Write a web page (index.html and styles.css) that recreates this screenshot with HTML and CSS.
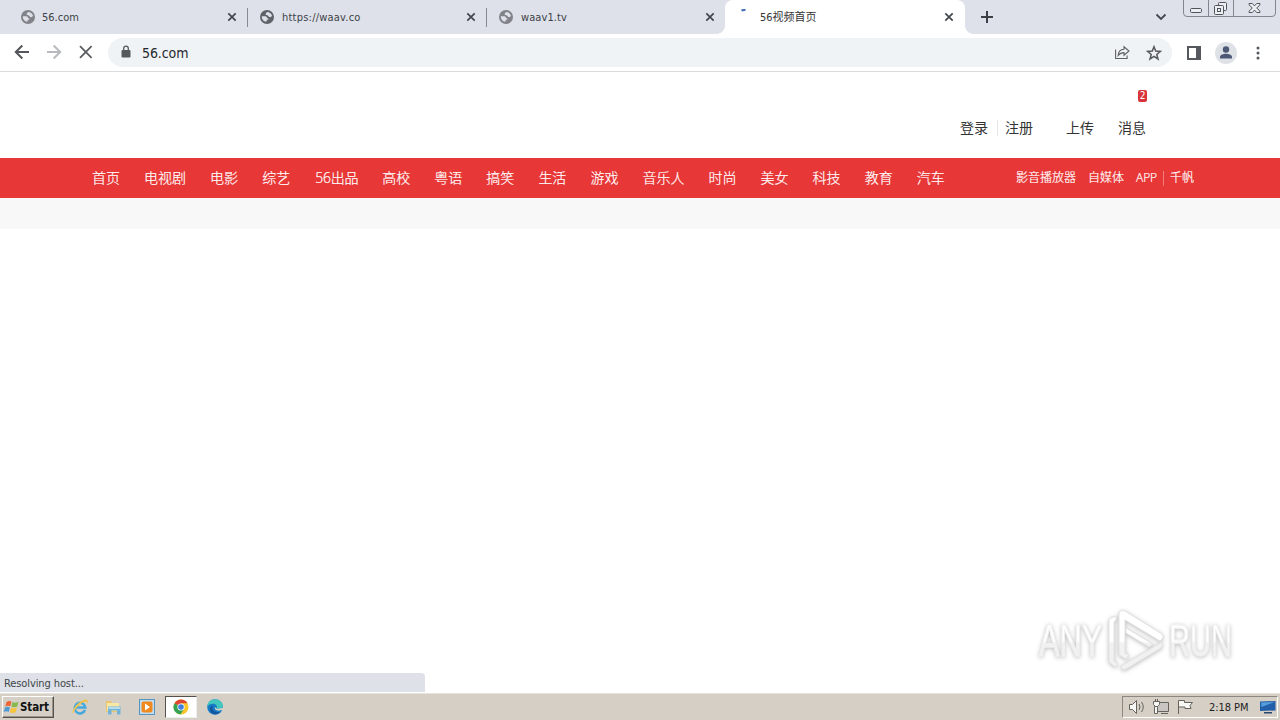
FILE: index.html
```html
<!DOCTYPE html>
<html lang="zh">
<head>
<meta charset="utf-8">
<title>56视频首页</title>
<link rel="stylesheet" href="styles.css">
</head>
<body>
<svg width="0" height="0" class="defs">
  <symbol id="globe" viewBox="0 0 14 14"><circle cx="7" cy="7" r="7" fill="currentColor"/><path d="M1.800 6.300h3.400c1.300 0 1.800.9 1.800 1.900h1.300v1.500H6.700v1.900c-2.800.3-5-2.300-4.900-5.300zM7.700 2.100c2 .3 3.700 1.700 4.300 3.700-.5 1.100-1.500 1.600-2.600 1.300-.9-.2-.8-1.400-1.500-1.600-1-.2-2.200.1-2.200-1.200 0-1.200 1-1.900 2-2.200z" fill="#dee1e9"/></symbol>
  <symbol id="close" viewBox="0 0 10 10"><path d="M1.300 1.300l7.400 7.400M8.700 1.300L1.300 8.700" stroke="#43474c" stroke-width="1.700"/></symbol>
</svg>
<div class="tabs">
  <div class="tab t1"><svg class="fav gray"><use href="#globe"/></svg><span class="title">56.com</span><svg class="x"><use href="#close"/></svg></div>
  <div class="tab t2"><svg class="fav"><use href="#globe"/></svg><span class="title">https://waav.co</span><svg class="x"><use href="#close"/></svg></div>
  <div class="tab t3"><svg class="fav gray"><use href="#globe"/></svg><span class="title">waav1.tv</span><svg class="x"><use href="#close"/></svg></div>
  <div class="tab active"><svg class="spin" viewBox="0 0 14 14"><path d="M4.500 1.700Q6 .7 8.500 1" stroke="#4472b8" stroke-width="2" fill="none"/></svg><span class="title">56视频首页</span><svg class="x"><use href="#close"/></svg></div>
  <svg class="plus" viewBox="0 0 14 14"><path d="M7 1v12M1 7h12" stroke="#3c4045" stroke-width="2"/></svg>
  <svg class="chev" viewBox="0 0 12 8"><path d="M1.500 1.500L6 6l4.500-4.500" stroke="#43474c" stroke-width="1.800" fill="none"/></svg>
  <svg class="winbtns" viewBox="0 0 94 18"><path d="M.5 0v13q0 3.500 3.500 3.500h85q3.500 0 3.500-3.500V0M25.500 0v16.500M50.500 0v16.500" fill="none" stroke="#82868f"/><g fill="#eceef2" stroke="#50545b"><rect x="7.500" y="8.500" width="11" height="4" rx="1.200"/><rect x="35.500" y="2.500" width="8" height="8" rx="1"/><rect x="31.500" y="5.500" width="9" height="9" rx="1"/><rect x="34.500" y="8.500" width="3" height="3"/><path d="M66 3.500h3.300l2.200 2.400 2.200-2.400H77v1.300L73.700 8l3.300 3.200v1.300h-3.300l-2.200-2.400-2.200 2.400H66v-1.300L69.300 8 66 4.800z"/></g></svg>
</div>
<div class="toolbar">
  <svg class="navi" viewBox="0 0 90 20"><g fill="none" stroke-width="2"><path d="M15 9H2M8.300 2.500L1.800 9l6.500 6.500" stroke="#53565a"/><path d="M33 9h13M39.700 2.500l6.500 6.500-6.500 6.500" stroke="#b8babd"/><path d="M66 3.200l11.600 11.600M77.600 3.200L66 14.800" stroke="#5a5d61" stroke-width="1.800"/></g></svg>
  <div class="omnibox">
    <svg class="lock" viewBox="0 0 10 12"><rect x=".5" y="4.500" width="9" height="7.500" rx="1" fill="#55585d"/><path d="M2.700 5V3a2.300 2.300 0 0 1 4.600 0v2" fill="none" stroke="#55585d" stroke-width="1.300"/></svg>
    <span class="url">56.com</span>
    <svg class="share" viewBox="0 0 16 15"><path d="M1.600 4.500v9h11.500v-3" fill="none" stroke="#5d6166" stroke-width="1.100"/><path d="M4.200 10.500c.2-4 2.300-6 5.800-6.200V1.800l5 4.200-5 4.200V7.600c-2.700 0-4.400 1-5.800 2.900z" fill="none" stroke="#5d6166" stroke-width="1.100"/></svg>
    <svg class="star" viewBox="0 0 16 16"><path d="M8 1.700l1.700 4.400 4.700.3-3.600 3 1.200 4.600L8 11.400 4 14l1.200-4.600-3.600-3 4.700-.3z" fill="none" stroke="#55585d" stroke-width="1.500"/></svg>
  </div>
  <svg class="panel" viewBox="0 0 14 14"><rect x="1" y="1" width="12" height="12" fill="#fff" stroke="#55585d" stroke-width="2"/><path d="M9 1h4v12H9z" fill="#55585d"/></svg>
  <svg class="user" viewBox="0 0 22 22"><circle cx="11" cy="11" r="11" fill="#dee1e6"/><circle cx="11" cy="7.500" r="3.200" fill="#4c5875"/><path d="M5 16.500v-1.600c0-2 3.500-3.100 6-3.100s6 1.100 6 3.100v1.600z" fill="#4c5875"/></svg>
  <svg class="dots" viewBox="0 0 4 14"><g fill="#55585d"><circle cx="2" cy="2" r="1.500"/><circle cx="2" cy="7" r="1.500"/><circle cx="2" cy="12" r="1.500"/></g></svg>
</div>
<main>
  <header class="account"><a>登录</a><i></i><a class="reg">注册</a><a class="up">上传</a><a class="msg">消息<b>2</b></a></header>
  <nav>
    <div class="channels"><a>首页</a><a>电视剧</a><a>电影</a><a>综艺</a><a class="own">56出品</a><a>高校</a><a>粤语</a><a>搞笑</a><a>生活</a><a>游戏</a><a>音乐人</a><a>时尚</a><a>美女</a><a>科技</a><a>教育</a><a>汽车</a></div>
    <div class="extra"><a>影音播放器</a><a>自媒体</a><a class="app">APP</a><i></i><a class="qf">千帆</a></div>
  </nav>
  <div class="strip"></div>
  <div class="mark"><span>ANY</span><svg viewBox="0 0 60 64"><defs><linearGradient id="fade" x1="0" y1="0" x2="0" y2="64" gradientUnits="userSpaceOnUse"><stop offset=".5" stop-color="#fff"/><stop offset=".54" stop-color="#f1f1f1"/></linearGradient></defs><g fill="url(#fade)" stroke="#e3e3e3" stroke-width="1" stroke-linejoin="round"><path d="M2 12q0-2 2-3l5-2v4l-2 2v39l4 3-3 3-6-5z"/><path fill-rule="evenodd" d="M12 4q2-4 6-2l37 23q2 2 0 5l-2 2-35-21v33l4 2-3 4-7-4z"/><path d="M19 19l27 16-4 3-23-14zM14 57l41-24q1 4-1 6L19 60q-5 2-5-3z"/></g></svg><span>RUN</span></div>
  <div class="status">Resolving host...</div>
</main>
<footer>
  <div class="start"><svg viewBox="0 0 17 16"><path d="M3.500 3q2.500-1.800 5-.3L7.300 7.300q-2.400-1.300-5 .2z" fill="#ed6437"/><path d="M9.500 3q3 1.500 6-.3l-1.300 4.800q-3 1.300-5.800 0z" fill="#87b84b"/><path d="M2 8.400q2.600-1.500 5 0L5.700 13q-2.300-1.500-5 .1z" fill="#509bd3"/><path d="M8.200 8.600q3 1.300 5.800 0l-1.300 4.700q-3 1.500-5.800 0z" fill="#f6c53d"/></svg>Start</div>
  <svg class="app1" viewBox="0 0 18 18"><path d="M14 12A5.300 5.300 0 1 1 14.300 9.500H5" fill="none" stroke="#45a9dd" stroke-width="2.500"/><path d="M2.500 16C-1 13.500 7 3 14 1.500c3.500-.5 3 2.500 2 4.500 0-3-3-3-7 .5S2 14.500 2.500 16z" fill="#eec34e"/></svg>
  <svg class="app2" viewBox="0 0 18 18"><path d="M2 3h5l1 2h7v9H2z" fill="#e9c66b"/><path d="M3 5h12v8H3z" fill="#f8e8a6"/><path d="M4 8.500h12.500v8H13v-4H7.500v4H4z" fill="#72b4d8"/><path d="M4.500 9h11.500v2H4.500z" fill="#b5dced"/></svg>
  <svg class="app3" viewBox="0 0 18 18"><rect x="1.500" y="1.500" width="15" height="15" fill="#c3ddef" stroke="#5794bf"/><rect x="3.500" y="3.500" width="11" height="11" rx="2" fill="#f08a1e"/><path d="M7 5.500l5 3.500-5 3.500z" fill="#fff"/></svg>
  <div class="task"><svg viewBox="0 0 16 16"><circle cx="8" cy="8" r="7.500" fill="#f9c72b"/><path d="M8 8L1.500 4.200A7.500 7.500 0 0 1 14.500 4.200H8z" fill="#df4632"/><path d="M8 8L1.500 4.200A7.500 7.500 0 0 0 7.500 15.500L11 10z" fill="#36a354"/><circle cx="8" cy="8" r="3.600" fill="#fff"/><circle cx="8" cy="8" r="2.800" fill="#427fe0"/></svg></div>
  <svg class="edge" viewBox="0 0 16 16"><circle cx="8" cy="8" r="7.800" fill="#167bc7"/><path d="M.3 8C.5 3 4 .2 8 .2c5 0 8 3.500 7.800 6.500-.2 3-3.800 4-6.300 2.800C11 7 8.500 4.500 5.500 4.800 3 5 1 6.200.3 8z" fill="#43c6bd"/><path d="M6 7c-2 3 1 7 7 6-4 4-10 2-10-3 0-2 1-3 3-3z" fill="#14549b"/><path d="M8 8c-1 2.500 2 4.500 6 3.300l2-.3v-2.200l-3 .8c-1.500.3-3 .2-3.500-.2z" fill="#d5cfc6"/></svg>
  <div class="tray">
    <svg class="icons" viewBox="0 0 66 16"><g fill="#f7f7f5" stroke="#66635e"><path d="M1.500 5.500h3l4-4v13l-4-4h-3z"/><path d="M11 5q2 3 0 6M13.500 3q3.500 5 0 10" fill="none"/><path d="M29.500 3.500h11v9h-11z" fill="#c7c6c3"/><path d="M25.500 2.500h6v3l-2 2h-2l-2-2zM27.500 0v2.500M29.500 0v2.500M26.500 7.500h3v7h-3zM33 14.500h7"/><path d="M50.500 15V1.500h6v2h8l-2.500 3 1 3h-6V8h-6"/></g></svg>
    <span>2:18 PM</span>
    <svg class="desk" viewBox="0 0 16 14"><path d="M0 1.500L15.500 1v9.500L0 11z" fill="#235fa9"/><path d="M1 2.500L14.500 2l-13 5z" fill="#559ddb"/><path d="M4 12h8v1.500H4z" fill="#27476e"/></svg>
  </div>
</footer>
</body>
</html>
```
FILE: styles.css
```css
* { box-sizing: border-box; }
body { margin: 0; width: 1280px; height: 720px; overflow: hidden; display: flex; flex-direction: column; background: #fff; font-family: "DejaVu Sans Condensed", "Noto Sans CJK SC", sans-serif; color: #333; }
svg { flex: none; display: block; }
.defs { position: absolute; }
.tabs { height: 34px; flex: none; display: flex; align-items: center; background: #dee1e9; }
.tab { height: 34px; display: flex; align-items: center; font-size: 11px; white-space: nowrap; color: #3d4148; position: relative; }
.t1 { width: 248px; padding: 0 11px 0 21px; }
.t2 { width: 239px; padding: 0 11px 0 12px; }
.t2 .title { letter-spacing: .22px; }
.t3 { width: 238px; padding: 0 10px 0 12px; }
.t3 .title { letter-spacing: .1px; }
.t1::after, .t2::after { content: ""; position: absolute; right: 0; top: 8px; width: 1px; height: 19px; background: #868a92; }
.fav { width: 14px; height: 14px; color: #5f6368; margin-right: 8px; }
.t1 .fav { margin-right: 7px; }
.gray { color: #808387; }
.x { width: 10px; height: 10px; margin-left: auto; }
.active { width: 240px; background: #fff; border-radius: 8px 8px 0 0; padding: 0 11px 0 12px; color: #333; }
.active .title { line-height: 16px; margin-top: 2px; }
.active::before, .active::after { content: ""; position: absolute; bottom: 0; width: 8px; height: 8px; }
.active::before { left: -8px; background: radial-gradient(circle at 0 0, #dee1e9 7.500px, #fff 8px); }
.active::after { right: -8px; background: radial-gradient(circle at 100% 0, #dee1e9 7.500px, #fff 8px); }
.spin { width: 14px; height: 14px; margin: -2px 9px 0 0; }
.plus { width: 14px; height: 14px; margin-left: 15px; }
.chev { width: 12px; height: 8px; margin-left: 161px; }
.winbtns { width: 94px; height: 18px; align-self: flex-start; margin-left: 16px; }
.toolbar { height: 38px; flex: none; display: flex; align-items: center; border-bottom: 1px solid #dadbdd; }
.navi { width: 90px; height: 20px; margin: 0 4px 0 14px; }
.omnibox { width: 1064px; height: 29px; border-radius: 15px; background: #f0f3f5; display: flex; align-items: center; padding: 0 10px 0 13px; }
.lock { width: 10px; height: 13px; margin-top: -2px; }
.url { font-size: 14px; margin-left: 11px; color: #25282c; letter-spacing: -.1px; }
.share { width: 16px; height: 15px; margin-left: auto; }
.star { width: 16px; height: 16px; margin-left: 16px; }
.panel { width: 14px; height: 14px; margin-left: 15px; }
.user { width: 22px; height: 22px; margin-left: 14px; }
.dots { width: 4px; height: 14px; margin-left: 19px; }
main { flex: 1; position: relative; }
.account { height: 86px; padding: 46px 0 0 960px; display: flex; font-size: 14px; line-height: 20px; }
.account i { width: 1px; height: 16px; margin: 2px 7px 0 9px; background: #e5e5e5; }
.account a { width: 28px; position: relative; white-space: nowrap; }
.account .up { margin-left: 33px; }
.account .msg { margin-left: 24px; }
.account b { position: absolute; left: 20px; top: -28px; width: 9px; height: 12px; background: #d8353a; border-radius: 2px; color: #fff; font-size: 10px; font-weight: 400; line-height: 12px; text-align: center; }
nav { height: 40px; background: #e83737; color: #fff; display: flex; line-height: 40px; padding-left: 92px; white-space: nowrap; font-family: "Open Sans", "Noto Sans", "Noto Sans CJK SC", sans-serif; }
.channels { display: flex; gap: 24.050px; font-size: 14px; font-weight: 300; width: 924px; -webkit-text-stroke: .2px #fff; }
.own { width: 44px; padding-left: 1px; letter-spacing: -.2px; }
.extra { display: flex; font-size: 12px; font-weight: 300; -webkit-text-stroke: .2px #fff; }
.extra a { margin-right: 12px; }
.extra .app { margin-right: 5px; width: 22px; letter-spacing: -.1px; }
.extra i { width: 1px; height: 15px; margin: 13px 6px 0 0; background: #f17c7c; }
.strip { height: 31px; background: #f8f8f8; }
.mark { position: absolute; left: 1039px; top: 537px; height: 64px; display: flex; align-items: center; filter: drop-shadow(0 1px 2px #bbb); }
.mark span { font: 44px/60px "Liberation Sans", sans-serif; width: 92px; margin-right: -28px; transform-origin: 0 50%; transform: scaleX(.7); color: transparent; background: linear-gradient(#fff 50%, #f1f1f1 54%); background-clip: text; -webkit-background-clip: text; -webkit-text-stroke: 1px #f0f0f0; }
.mark svg { width: 60px; height: 64px; margin: 0 0 0 4px; }
.mark svg + span { margin-left: 2px; transform: scaleX(.66); width: 98px; }
.status { position: absolute; left: 0; bottom: 1px; width: 425px; height: 19px; background: #dee1e7; border-radius: 0 4px 0 0; padding-left: 4px; font-size: 11px; line-height: 21px; color: #40444a; letter-spacing: -.1px; }
footer { height: 27px; flex: none; background: #d5cfc6; display: flex; align-items: center; border-top: 1px solid #e6e2dc; }
.start { width: 52px; height: 22px; margin-left: 2px; display: flex; align-items: center; font: bold 11.500px "DejaVu Sans Condensed", sans-serif; letter-spacing: -.1px; color: #111; border: 1px solid; border-color: #fff #55524e #55524e #fff; box-shadow: inset -1px -1px #99948c; }
.start svg { width: 17px; height: 16px; }
.app1, .app2, .app3 { width: 18px; height: 18px; }
.app1 { margin-left: 17px; }
.app2 { margin-left: 15px; }
.app3 { margin-left: 16px; }
.task { width: 32px; height: 22px; margin-left: 9px; background: #fff; border: 1px solid; border-color: #55524e #eee #eee #55524e; display: grid; place-items: center; }
.task svg, .edge { width: 16px; height: 16px; }
.edge { margin-left: 10px; }
.tray { width: 156px; height: 22px; margin-left: auto; margin-right: 2px; border: 1px solid; border-color: #8c8780 #fff #fff #8c8780; display: flex; align-items: center; padding-left: 5px; font-size: 11px; color: #222; white-space: nowrap; }
.icons { width: 66px; height: 16px; }
.tray span { margin-left: 15px; width: 43px; letter-spacing: -.05px; }
.desk { width: 16px; height: 14px; margin-left: 8px; }
```
